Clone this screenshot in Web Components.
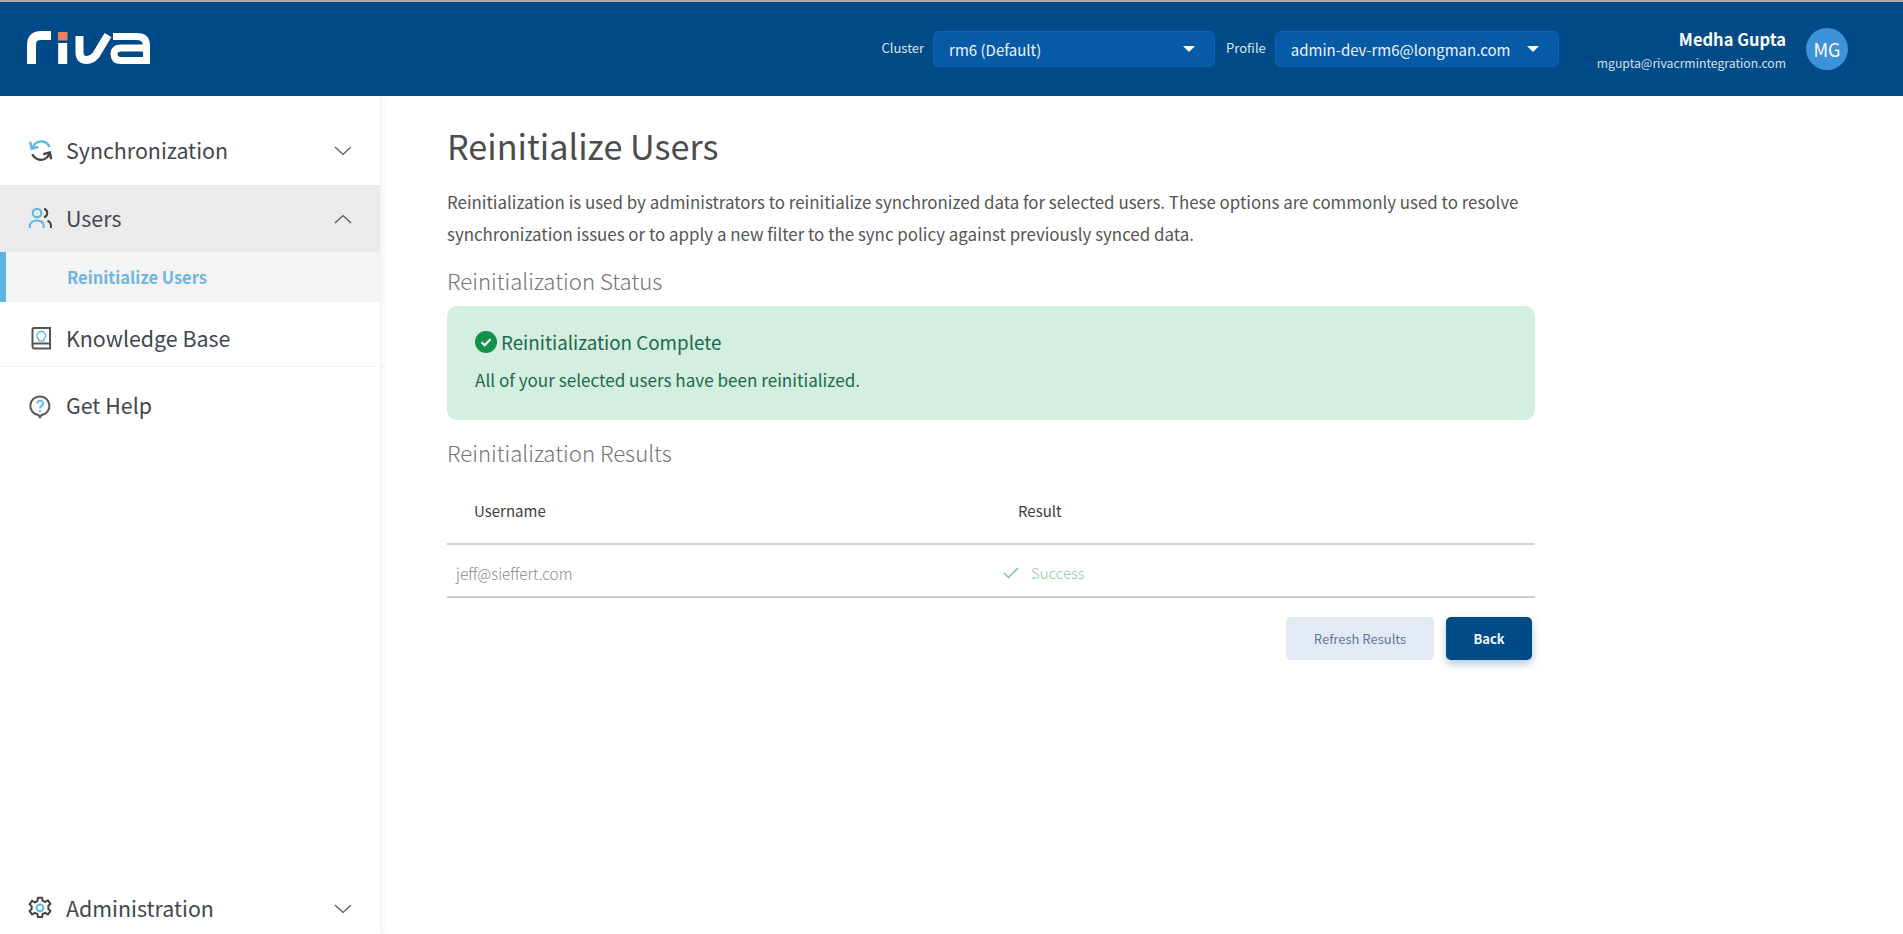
<!DOCTYPE html>
<html lang="en">
<head>
<meta charset="utf-8">
<title>Reinitialize Users</title>
<style>
  html, body { margin: 0; height: 100%; background: #fff; }
  body { font-family: "Noto Sans CJK SC", "Noto Sans", sans-serif; color: #4a4a4a; overflow: hidden; }
</style>
</head>
<body>
<riva-app></riva-app>

<script>
const FONT = '"Noto Sans CJK SC", "Noto Sans", sans-serif';

class RivaSelect extends HTMLElement {
    constructor() {
        super();
        this.attachShadow({ mode: 'open' });
        const w = this.getAttribute('width');
        this.shadowRoot.innerHTML = `
            <style>
                :host { display: flex; align-items: center; white-space: nowrap; }
                label { font-size: 13px; color: #dbe6f0; margin-right: 9px; position: relative; top: -2px; }
                .box {
                    box-sizing: border-box; width: ${w}px; height: 36px;
                    display: flex; align-items: center; justify-content: space-between;
                    padding: 0 19px 0 15px;
                    background: #075aa5; border: 1px solid #0b64b4; border-radius: 6px;
                    color: #eef4fa; font-size: 15px;
                }
                .caret { width: 0; height: 0; border-left: 6px solid transparent; border-right: 6px solid transparent; border-top: 6px solid #fff; }
            </style>
            <label>${this.getAttribute('label')}</label>
            <div class="box"><span><slot></slot></span><i class="caret"></i></div>`;
    }
}
customElements.define('riva-select', RivaSelect);

class RivaHeader extends HTMLElement {
    constructor() {
        super();
        this.attachShadow({ mode: 'open' });
        this.shadowRoot.innerHTML = `
            <style>
                :host {
                    display: flex; align-items: center; box-sizing: border-box;
                    height: 96px; padding: 0 55px 0 27px;
                    background: #004b87; border-top: 2px solid #a9a9a9;
                }
                svg.logo { display: block; margin-top: -2px; }
                .spacer { flex: 1; }
                riva-select + riva-select { margin-left: 11px; }
                .user { margin-left: 38px; text-align: right; }
                .name { font-size: 16.500px; font-weight: 700; line-height: 24px; color: #fff; }
                .mail { font-size: 12.200px; line-height: 18px; color: #d4e0ec; margin-top: 3px; }
                .avatar {
                    width: 42px; height: 42px; border-radius: 50%; margin-left: 20px; background: #3e92d8;
                    display: flex; align-items: center; justify-content: center; color: #fff; font-size: 18px;
                }
            </style>
            <svg class="logo" width="124" height="34" viewBox="0 0 124 34" fill="none" stroke="#fff" stroke-width="9">
                <path d="M4.500 33V14Q4.500 4.500 14 4.500H24"/>
                <rect x="31" y="1" width="9.500" height="8.500" fill="#e8835a" stroke="none"/>
                <path d="M35.700 12V33"/>
                <path d="M52.500 5V21Q52.500 29 60 29Q65 29 69 24L81 4" stroke-width="8"/>
                <path d="M86 5.500H110Q119.500 5.500 119.500 15V29.500H94Q87 29.500 87 23Q87 17 94 17H119" stroke-width="7"/>
            </svg>
            <div class="spacer"></div>
            <riva-select label="Cluster" width="282">rm6 (Default)</riva-select>
            <riva-select label="Profile" width="284">admin-dev-rm6@longman.com</riva-select>
            <div class="user">
                <div class="name">Medha Gupta</div>
                <div class="mail">mgupta@rivacrmintegration.com</div>
            </div>
            <div class="avatar">MG</div>`;
    }
}
customElements.define('riva-header', RivaHeader);

const NAV_ICONS = {
    sync: `<g stroke-width="2.400"><path d="M4.500 10.500C6 5.500 10 3 14 3.400c3.400.3 6 2.200 7.600 5.600" stroke="#5bb5dc"/><path d="M2.200 3.800 3.600 10.600l6.600-1.600" stroke="#5bb5dc"/>
           <path d="M21.500 15C20 19.800 16 22.200 12 21.800 8.400 21.500 6 19.500 4.300 16.300" stroke="#444"/><path d="M23.200 21.200 21.800 14.500l-6.500 1.600" stroke="#444"/></g>`,
    users: `<circle cx="9" cy="7" r="4.300" stroke="#5bb5dc"/><path d="M1.800 22V20.500C1.800 16.500 5 14.400 9 14.400s6.800 2.100 6.800 6.100V22" stroke="#5bb5dc"/>
            <path d="M16 2.800a4.400 4.400 0 0 1 0 8.500" stroke="#444"/><path d="M19.500 14.800c2.200.9 3.500 2.900 3.500 5.500V22" stroke="#444"/>`,
    book: `<path d="M4.500 18.500V3.500a1.500 1.500 0 0 1 1.500-1.500H22v20.500H6a1.900 1.900 0 0 1-1.500-1.900v-2.100a1.500 1.500 0 0 1 1.500-1H22" stroke="#555"/>
           <path d="M10.800 13.500C9.500 12.400 9 11 9 9.800a4.300 4.300 0 0 1 8.600 0c0 1.200-.6 2.600-1.800 3.700v1.300h-5z" stroke="#5bb5dc" stroke-width="1.300"/>`,
    help: `<path d="M12 2.500a9.300 9.300 0 0 1 1.500 18.500L12 23.200 10.300 21A9.300 9.300 0 0 1 12 2.500z" stroke="#555"/>
           <path d="M9.200 9.500a2.900 2.900 0 1 1 4.500 2.400c-1.100.7-1.700 1.300-1.700 2.500" stroke="#5bb5dc" stroke-width="1.900"/><circle cx="12" cy="17.200" r="1.100" fill="#5bb5dc" stroke="none"/>`,
    gear: `<path d="M10 1.800h4l.7 3 2.500 1.100 2.700-1.500 2.500 3.400-2.100 2.200v2.800l2.100 2.200-2.500 3.400-2.700-1.500-2.500 1.100-.7 3h-4l-.7-3-2.500-1.100-2.700 1.500-2.500-3.400 2.100-2.200V10.400L1.600 8.200l2.500-3.400 2.700 1.500 2.500-1.100z" stroke="#444"/>
           <circle cx="12" cy="11.800" r="3.400" stroke="#5bb5dc" stroke-width="2"/>`
};

class RivaNavItem extends HTMLElement {
    constructor() {
        super();
        this.attachShadow({ mode: 'open' });
        const chev = this.getAttribute('chevron');
        const chevron = chev
            ? `<svg class="chev" width="18" height="10" viewBox="0 0 18 10" fill="none" stroke="#555" stroke-width="1.200"><path d="${chev === 'up' ? 'M1 9 9 1.500 17 9' : 'M1 1 9 8.500 17 1'}"/></svg>`
            : '';
        this.shadowRoot.innerHTML = `
            <style>
                :host { display: flex; align-items: center; box-sizing: border-box; height: 67px; padding: 0 28px; font-size: 21.400px; color: #3f4750; }
                :host([active]) { background: #ebebeb; }
                :host([divider]) { height: 65px; padding-top: 9px; border-bottom: 1px solid #f3f3f3; }
                :host([tall]) { height: 78px; }
                svg.icon { flex: none; margin-right: 13px; }
                .label { flex: 1; padding-bottom: 3px; }
            </style>
            <svg class="icon" width="25" height="25" viewBox="0 0 25 25" fill="none" stroke-width="2">${NAV_ICONS[this.getAttribute('icon')]}</svg>
            <span class="label"><slot></slot></span>
            ${chevron}`;
    }
}
customElements.define('riva-nav-item', RivaNavItem);

class RivaSubItem extends HTMLElement {
    constructor() {
        super();
        this.attachShadow({ mode: 'open' });
        this.shadowRoot.innerHTML = `
            <style>
                :host {
                    display: flex; align-items: center; box-sizing: border-box; height: 50px;
                    padding-left: 61px; background: #f4f4f4; border-left: 6px solid #5bb5dc;
                    color: #6db6e3; font-size: 16.500px; font-weight: 700;
                }
            </style>
            <slot></slot>`;
    }
}
customElements.define('riva-sub-item', RivaSubItem);

class RivaSidebar extends HTMLElement {
    constructor() {
        super();
        this.attachShadow({ mode: 'open' });
        this.shadowRoot.innerHTML = `
            <style>
                :host {
                    display: flex; flex-direction: column; flex: none; box-sizing: border-box;
                    width: 380px; padding-top: 22px; background: #fff;
                    box-shadow: 3px 0 6px rgba(0,0,0,.05);
                }
                .bottom { margin-top: auto; margin-bottom: -8px; }
                .first { padding-bottom: 2px; }
            </style>
            <riva-nav-item class="first" icon="sync" chevron="down">Synchronization</riva-nav-item>
            <riva-nav-item icon="users" chevron="up" active>Users</riva-nav-item>
            <riva-sub-item>Reinitialize Users</riva-sub-item>
            <riva-nav-item icon="book" divider>Knowledge Base</riva-nav-item>
            <riva-nav-item icon="help" tall>Get Help</riva-nav-item>
            <riva-nav-item class="bottom" icon="gear" chevron="down">Administration</riva-nav-item>`;
    }
}
customElements.define('riva-sidebar', RivaSidebar);

class RivaAlert extends HTMLElement {
    constructor() {
        super();
        this.attachShadow({ mode: 'open' });
        this.shadowRoot.innerHTML = `
            <style>
                :host { display: block; box-sizing: border-box; height: 114px; padding: 23px 28px 0; background: #d4eedf; border-radius: 10px; color: #1c6a4c; }
                .title { display: flex; align-items: center; gap: 4px; font-size: 18.800px; line-height: 26px; }
                .text { font-size: 17.100px; line-height: 26px; margin-top: 12px; }
            </style>
            <div class="title">
                <svg width="22" height="22" viewBox="0 0 22 22"><circle cx="11" cy="11" r="11" fill="#14914a"/><path d="M6.500 11.300 9.700 14.300 15.500 8.300" fill="none" stroke="#fff" stroke-width="2.200"/></svg>
                <span>${this.getAttribute('heading')}</span>
            </div>
            <div class="text"><slot></slot></div>`;
    }
}
customElements.define('riva-alert', RivaAlert);

class RivaResults extends HTMLElement {
    constructor() {
        super();
        this.attachShadow({ mode: 'open' });
        this.shadowRoot.innerHTML = `
            <style>
                :host { display: block; font-size: 15px; }
                .row { display: grid; grid-template-columns: 543px 1fr; align-items: center; }
                .head { height: 68px; border-bottom: 2px solid #cfcfcf; box-sizing: border-box; color: #3d3d3d; }
                .head div { padding-left: 27px; }
                .head div + div { padding-left: 28px; }
                .body { height: 53px; border-bottom: 2px solid #cfcfcf; box-sizing: border-box; color: #8a8a8a; font-weight: 300; padding-top: 4px; }
                .body > div:first-child { padding-left: 9px; font-size: 15.300px; }
                .ok { display: flex; align-items: center; padding-left: 13px; color: #8fcb9f; }
                .ok svg { margin-right: 12px; }
            </style>
            <div class="row head"><div>Username</div><div>Result</div></div>
            <div class="row body">
                <div>jeff@sieffert.com</div>
                <div class="ok"><svg width="16" height="12" viewBox="0 0 16 12" fill="none" stroke="#7cc48f" stroke-width="1.400"><path d="M1 6 5.500 10.500 15 1"/></svg>Success</div>
            </div>`;
    }
}
customElements.define('riva-results', RivaResults);

class RivaButton extends HTMLElement {
    constructor() {
        super();
        this.attachShadow({ mode: 'open' });
        this.shadowRoot.innerHTML = `
            <style>
                :host {
                    display: flex; align-items: center; justify-content: center; box-sizing: border-box;
                    height: 43px; border-radius: 5px; font-size: 13px;
                    background: #e3eaf6; color: #64789f; width: 148px;
                }
                :host([primary]) { background: #004b87; color: #f1f6fb; font-weight: 700; width: 86px; box-shadow: 0 4px 8px rgba(0,75,135,.3); }
            </style>
            <slot></slot>`;
    }
}
customElements.define('riva-button', RivaButton);

class RivaMain extends HTMLElement {
    constructor() {
        super();
        this.attachShadow({ mode: 'open' });
        this.shadowRoot.innerHTML = `
            <style>
                :host { display: block; flex: 1; padding: 27px 0 0 67px; }
                .wrap { width: 1088px; }
                h1 { margin: 0; font-size: 34.200px; font-weight: 400; line-height: 44px; color: #4c4c4c; }
                p { margin: 19px 0 0; font-size: 16.900px; line-height: 32px; color: #545454; }
                h2 { margin: 15px 0 11px; font-size: 22.200px; font-weight: 300; line-height: 30px; color: #757575; }
                riva-alert + h2 { margin-top: 17px; margin-bottom: 10px; }
                .actions { display: flex; justify-content: flex-end; gap: 12px; margin-top: 19px; padding-right: 3px; }
            </style>
            <div class="wrap">
                <h1>Reinitialize Users</h1>
                <p>Reinitialization is used by administrators to reinitialize synchronized data for selected users. These options are commonly used to resolve synchronization issues or to apply a new filter to the sync policy against previously synced data.</p>
                <h2>Reinitialization Status</h2>
                <riva-alert heading="Reinitialization Complete">All of your selected users have been reinitialized.</riva-alert>
                <h2>Reinitialization Results</h2>
                <riva-results></riva-results>
                <div class="actions">
                    <riva-button>Refresh Results</riva-button>
                    <riva-button primary>Back</riva-button>
                </div>
            </div>`;
    }
}
customElements.define('riva-main', RivaMain);

class RivaApp extends HTMLElement {
    constructor() {
        super();
        this.attachShadow({ mode: 'open' });
        this.shadowRoot.innerHTML = `
            <style>
                :host { display: flex; flex-direction: column; height: 934px; font-family: ${FONT}; }
                .below { display: flex; flex: 1; min-height: 0; }
            </style>
            <riva-header></riva-header>
            <div class="below">
                <riva-sidebar></riva-sidebar>
                <riva-main></riva-main>
            </div>`;
    }
}
customElements.define('riva-app', RivaApp);
</script>
</body>
</html>
